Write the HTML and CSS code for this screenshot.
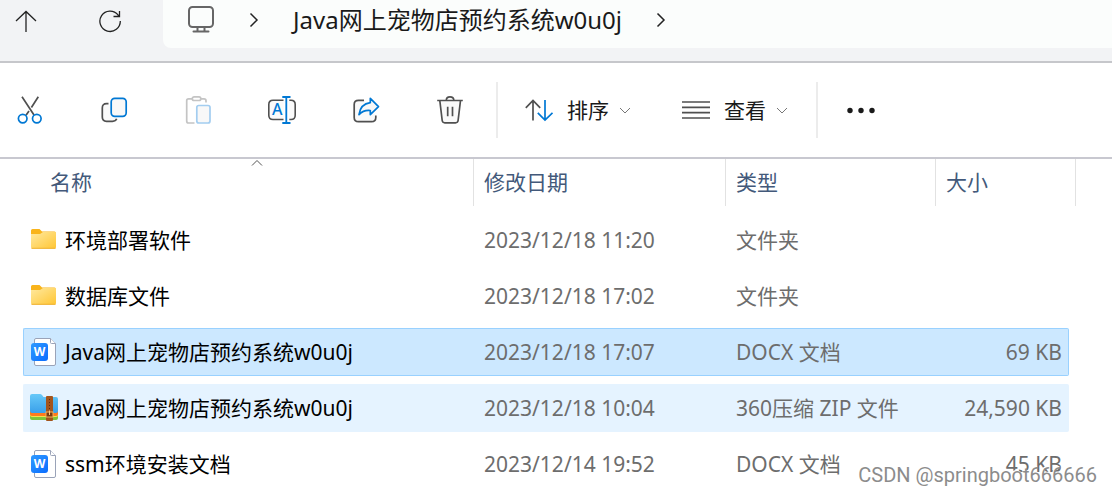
FILE: index.html
```html
<!DOCTYPE html>
<html lang="zh-CN">
<head>
    <meta charset="UTF-8">
    <meta name="viewport" content="width=device-width, initial-scale=1.0">
    <title>Java网上宠物店预约系统w0u0j</title>
    <link rel="stylesheet" href="styles.css">
</head>
<body>

<!-- Shared icons -->
<svg class="defs" width="0" height="0" aria-hidden="true">
    <defs>
        <linearGradient id="folderFill" x1="0" y1="0" x2="1" y2="1">
            <stop offset="0" stop-color="#ffe9a0"/>
            <stop offset="1" stop-color="#ffc634"/>
        </linearGradient>
        <linearGradient id="docFill" x1="0" y1="0" x2="1" y2="1">
            <stop offset="0" stop-color="#2f9bff"/>
            <stop offset="1" stop-color="#0a6cff"/>
        </linearGradient>
        <linearGradient id="zipFill" x1="0" y1="0" x2="0" y2="1">
            <stop offset="0" stop-color="#66c8f8"/>
            <stop offset="1" stop-color="#3aa0ea"/>
        </linearGradient>
    </defs>
    <symbol id="folder" viewBox="0 0 28 28">
        <path d="M1 7V4.500Q1 3 2.500 3H9.500L12 5.500H24.500Q26 5.500 26 7V10H1z" fill="#f9b41b"/>
        <path d="M1 8H10L13 6H26V21Q26 22.500 24.500 22.500H2.500Q1 22.500 1 21z" fill="url(#folderFill)"/>
        <path d="M1.500 22.300H25.500" stroke="#eeb02c" stroke-width="1" fill="none"/>
    </symbol>
    <symbol id="docx" viewBox="0 0 28 28">
        <path d="M6 .5H20.500L25.500 5.500V26Q25.500 27.500 24 27.500H6Q4.500 27.500 4.500 26V2Q4.500 .5 6 .5z" fill="#fff" stroke="#9aa3b8"/>
        <path d="M20.500 .5V4.500Q20.500 5.500 21.500 5.500H25.500" fill="#fff" stroke="#9aa3b8"/>
        <rect x="1" y="5" width="17" height="18" rx="3" fill="url(#docFill)"/>
    </symbol>
    <symbol id="zip" viewBox="0 0 28 28">
        <path d="M0 18H28V24Q28 26 26 26H2Q0 26 0 24z" fill="#7fc43a"/>
        <path d="M0 18H28V21Q28 23 26 23H2Q0 23 0 21z" fill="#f6e04c"/>
        <path d="M0 17H28V20Q28 22 26 22H2Q0 22 0 20z" fill="#ff7a1c"/>
        <path d="M0 17V2Q0 0 2 0H10Q11 0 12 1L13.500 3H26Q28 3 28 5V17Q28 19 26 19H2Q0 19 0 17z" fill="url(#zipFill)"/>
        <rect x="16" y="2" width="7" height="25" rx="1" fill="#a3541c"/>
        <path d="M19.500 5V17" stroke="#5f2c0c" stroke-width="1" stroke-dasharray="1 2"/>
        <rect x="16" y="18" width="7" height="5" fill="#7a3b10" stroke="#f3b35c" stroke-width="1"/>
        <path d="M19.500 16.500V21" stroke="#f8c884" stroke-width="1"/>
    </symbol>
    <symbol id="caret" viewBox="0 0 12 12">
        <path d="M1 4L6 9L11 4" fill="none" stroke="#777" stroke-width="1"/>
    </symbol>
    <symbol id="chevron" viewBox="0 0 10 16">
        <path d="M1.500 1.500L8 8L1.500 14.500" fill="none" stroke="#222" stroke-width="1.500"/>
    </symbol>
</svg>

<!-- Address bar -->
<header class="topbar">
    <nav class="nav-buttons">
        <button type="button" aria-label="向上">
            <svg width="24" height="24" viewBox="0 0 24 24" fill="none" stroke="#222" stroke-width="1.300"><path d="M12 23V2.500M2 12L12 2.500L22 12"/></svg>
        </button>
        <button type="button" aria-label="刷新">
            <svg width="24" height="24" viewBox="0 0 24 24" fill="none" stroke="#222" stroke-width="1.300"><path d="M22.300 12A10.200 10.200 0 1 1 20 5.800L21 7.500M21.500 2V7.500H15.500"/></svg>
        </button>
    </nav>
    <div class="address">
        <svg width="28" height="28" viewBox="0 0 28 28" fill="none" stroke="#666" stroke-width="2" stroke-linecap="round" aria-hidden="true">
            <rect x="2" y="1" width="24" height="20" rx="3.500"/><path d="M10.500 21V25M17.500 21V25M6.500 25.500H21.500"/>
        </svg>
        <svg width="10" height="16" aria-hidden="true"><use href="#chevron"/></svg>
        <a href="#">Java网上宠物店预约系统w0u0j</a>
        <svg width="10" height="16" aria-hidden="true"><use href="#chevron"/></svg>
    </div>
</header>

<!-- Command bar -->
<div class="toolbar">
    <div class="tools">
        <button type="button" aria-label="剪切">
            <svg width="28" height="28" viewBox="0 0 28 28" fill="none" stroke="#505050" stroke-width="1.700">
                <path d="M6 .7L18 19M22.300 .7L15.400 11.500M13 15L10 19.300"/>
                <g stroke="#0078d4"><circle cx="6.700" cy="22.600" r="4.300"/><circle cx="20.800" cy="22.600" r="4.300"/></g>
            </svg>
        </button>
        <button type="button" aria-label="复制">
            <svg width="28" height="28" viewBox="0 0 28 28" fill="none" stroke="#505050" stroke-width="1.700">
                <path d="M8.500 7.700H6.500Q2.300 7.700 2.300 12V21Q2.300 25.300 6.500 25.300H12.500Q15.800 25.300 16.700 22.800" fill="#fafafa"/>
                <rect x="11.200" y="2.300" width="15" height="18" rx="3.500" fill="#f8f8f8" stroke="#0078d4"/>
            </svg>
        </button>
        <button type="button" aria-label="粘贴" disabled>
            <svg width="28" height="28" viewBox="0 0 28 28" fill="none" stroke="#c4c4c4" stroke-width="1.700">
                <path d="M8 2.800H4.500Q2.700 2.800 2.700 4.800V25Q2.700 27 4.500 27H10.500M17 2.800H20Q22 2.800 22 4.800V6.500"/>
                <rect x="8.300" y=".9" width="8.500" height="3.600" rx="1.800"/>
                <rect x="12.800" y="9.500" width="13.200" height="17.500" rx="2" fill="#f8f8f8" stroke="#a3cdf0"/>
            </svg>
        </button>
        <button type="button" aria-label="重命名">
            <svg width="28" height="28" viewBox="0 0 28 28" fill="none" stroke="#505050" stroke-width="1.600">
                <path d="M15.500 4.200H5Q.8 4.200 .8 8.500V19.200Q.8 23.500 5 23.500H15.500M21.300 4.200H23Q27.200 4.200 27.200 8.500V19.200Q27.200 23.500 23 23.500H21.300" fill="#fafafa"/>
                <path d="M18.300 1V27M14.300 1H22.500M14.300 27H22.500" stroke="#0078d4" stroke-width="1.800"/>
                <text x="9.300" y="19" text-anchor="middle" class="rename-letter">A</text>
            </svg>
        </button>
        <button type="button" aria-label="共享">
            <svg width="28" height="28" viewBox="0 0 28 28" fill="none" stroke="#505050" stroke-width="1.700">
                <path d="M12 4.300H6.500Q2.200 4.300 2.200 8.500V21.500Q2.200 25.700 6.500 25.700H19.500Q23.800 25.700 23.800 21.500V19.500" fill="#fafafa"/>
                <path d="M18.300 2.300L26.500 10.600L18.300 18.600V14.500Q11.500 13.800 7 18.600Q8.500 8 18.300 6.700z" stroke="#0078d4" fill="#f8f8f8" stroke-linejoin="round"/>
            </svg>
        </button>
        <button type="button" aria-label="删除">
            <svg width="28" height="28" viewBox="0 0 28 28" fill="none" stroke="#505050" stroke-width="1.700">
                <path d="M3.800 4.500L6.200 24.500Q6.500 26.800 8.800 26.800H19.500Q21.800 26.800 22.100 24.500L24.500 4.500" fill="#fafafa"/>
                <path d="M1.200 4.500H26.800M10.300 4.500Q10.300 .9 14 .9T17.900 4.500M11.700 10.700V20.200M16.500 10.700V20.200"/>
            </svg>
        </button>
    </div>
    <div class="menus">
        <button type="button">
            <svg width="28" height="28" viewBox="0 0 28 28" fill="none" stroke="#505050" stroke-width="1.700">
                <path d="M8 24.500V4.500M.8 11.800L8 4.500L15.200 11.800"/><path d="M20 4V24M12.800 16.800L20 24L27.500 16.800" stroke="#0078d4"/>
            </svg>
            排序
            <svg width="12" height="12"><use href="#caret"/></svg>
        </button>
        <button type="button">
            <svg width="28" height="28" viewBox="0 0 28 28" fill="none" stroke="#505050" stroke-width="1.700">
                <path d="M0 6H28M0 11.300H28M0 16.700H28M0 22H28"/>
            </svg>
            查看
            <svg width="12" height="12"><use href="#caret"/></svg>
        </button>
    </div>
    <button type="button" class="more" aria-label="查看更多">
        <svg width="30" height="28" viewBox="0 0 30 28" fill="#1a1a1a"><circle cx="4" cy="14.500" r="2.700"/><circle cx="15" cy="14.500" r="2.700"/><circle cx="26" cy="14.500" r="2.700"/></svg>
    </button>
</div>

<!-- File list -->
<main class="files">
    <table>
        <colgroup>
            <col>
            <col class="col-date">
            <col class="col-type">
            <col class="col-size">
        </colgroup>
        <thead>
            <tr>
                <th>
                    <button type="button">名称</button>
                    <svg class="sort-mark" width="12" height="8" viewBox="0 0 12 8" aria-hidden="true"><path d="M1 6.500L6 1.500L11 6.500" fill="none" stroke="#555"/></svg>
                </th>
                <th><button type="button">修改日期</button></th>
                <th><button type="button">类型</button></th>
                <th><button type="button">大小</button></th>
            </tr>
        </thead>
        <tbody>
            <tr>
                <td><div class="name"><svg width="28" height="28" aria-hidden="true"><use href="#folder"/></svg>环境部署软件</div></td>
                <td>2023/12/18 11:20</td>
                <td>文件夹</td>
                <td></td>
            </tr>
            <tr>
                <td><div class="name"><svg width="28" height="28" aria-hidden="true"><use href="#folder"/></svg>数据库文件</div></td>
                <td>2023/12/18 17:02</td>
                <td>文件夹</td>
                <td></td>
            </tr>
            <tr class="selected">
                <td><div class="name"><svg width="28" height="28" aria-hidden="true"><use href="#docx"/><text x="9.500" y="18" text-anchor="middle" class="doc-letter">W</text></svg>Java网上宠物店预约系统w0u0j</div></td>
                <td>2023/12/18 17:07</td>
                <td>DOCX 文档</td>
                <td>69 KB</td>
            </tr>
            <tr class="hovered">
                <td><div class="name"><svg width="28" height="28" aria-hidden="true"><use href="#zip"/></svg>Java网上宠物店预约系统w0u0j</div></td>
                <td>2023/12/18 10:04</td>
                <td>360压缩 ZIP 文件</td>
                <td>24,590 KB</td>
            </tr>
            <tr>
                <td><div class="name"><svg width="28" height="28" aria-hidden="true"><use href="#docx"/><text x="9.500" y="18" text-anchor="middle" class="doc-letter">W</text></svg>ssm环境安装文档</div></td>
                <td>2023/12/14 19:52</td>
                <td>DOCX 文档</td>
                <td>45 KB</td>
            </tr>
        </tbody>
    </table>
    <div class="watermark">CSDN @springboot666666</div>
</main>

</body>
</html>
```
FILE: styles.css
```css
* {
    box-sizing: border-box;
}
body {
    margin: 0;
    background: #fff;
    color: #000;
    font-family: "Noto Sans", "Noto Sans CJK SC", sans-serif;
    font-size: 21px;
    line-height: 28px;
    font-kerning: none;
}
svg {
    display: block;
    flex: none;
}
.defs {
    position: absolute;
}
button {
    padding: 0;
    border: 0;
    background: none;
    color: inherit;
    font: inherit;
}

/* address bar */
.topbar {
    display: flex;
    background: #f2f3f5;
    border-bottom: 2px solid #c6c7cb;
}
.nav-buttons {
    display: flex;
    align-items: center;
    gap: 60px;
    height: 41px;
    padding: 0 41px 0 14px;
}
.address {
    display: flex;
    flex: 1;
    align-items: center;
    height: 48px;
    margin-bottom: 13px;
    padding: 0 24px 8px;
    background: #fbfdfc;
    border-bottom-left-radius: 8px;
    font-size: 24px;
    gap: 34px;
}
.address a {
    color: #1a1a1a;
    text-decoration: none;
    white-space: nowrap;
}

/* command bar */
.toolbar {
    display: flex;
    align-items: center;
    height: 96px;
    border-bottom: 2px solid #c8c8d0;
}
.tools {
    display: flex;
    gap: 56px;
    padding: 0 32px 0 16px;
}
.menus {
    display: flex;
    align-items: center;
    gap: 51px;
    height: 56px;
    padding: 0 28px 0 27px;
    border: solid #ececec;
    border-width: 0 2px;
}
.menus button {
    display: flex;
    align-items: center;
    gap: 14px;
    color: #1a1a1a;
    white-space: nowrap;
}
.menus svg:last-child {
    margin-left: -4px;
}
.more {
    margin-left: 28px;
}
.rename-letter {
    fill: #0078d4;
    stroke: none;
    font: 500 16px "Noto Sans", sans-serif;
}

/* file list */
.files {
    position: relative;
    padding: 0 43px 7px 23px;
}
table {
    width: 100%;
    table-layout: fixed;
    border-spacing: 0 8px;
    margin: -8px 0;
}
.col-date {
    width: 252px;
}
.col-type {
    width: 210px;
}
.col-size {
    width: 134px;
}
th {
    position: relative;
    height: 49px;
    padding: 0;
    color: #43597a;
    font-weight: normal;
    text-align: left;
    vertical-align: top;
}
th button {
    display: block;
    width: 100%;
    height: 47px;
    padding: 0 0 2px 10px;
    border-left: 1px solid #e2e2e2;
    text-align: left;
}
th:first-child button {
    padding-left: 27px;
    border-left: 0;
}
th:last-child button {
    width: calc(100% + 7px);
    border-right: 1px solid #e2e2e2;
}
.sort-mark {
    position: absolute;
    top: 0;
    left: 228px;
}
td {
    height: 48px;
    padding: 0 0 0 11px;
    border: solid transparent;
    border-width: 1px 0;
    color: #6d6d6d;
    white-space: nowrap;
}
td:first-child {
    padding-left: 6px;
    border-left-width: 1px;
    border-radius: 2px 0 0 2px;
    color: #000;
}
td:last-child {
    padding-right: 6px;
    border-right-width: 1px;
    border-radius: 0 2px 2px 0;
    text-align: right;
}
.name {
    display: flex;
    align-items: center;
    gap: 7px;
}
.selected td {
    background: #cce8ff;
    border-color: #99d1ff;
}
.hovered td {
    background: #e5f3ff;
    border-color: #e5f3ff;
}
.doc-letter {
    fill: #fff;
    font: 700 12px "Noto Sans", sans-serif;
}
.watermark {
    position: absolute;
    right: 15px;
    bottom: 6px;
    color: #8c8c8c;
    font-family: Roboto, sans-serif;
    font-size: 20px;
    text-shadow: -1px -1px 0 #fff;
}
```
